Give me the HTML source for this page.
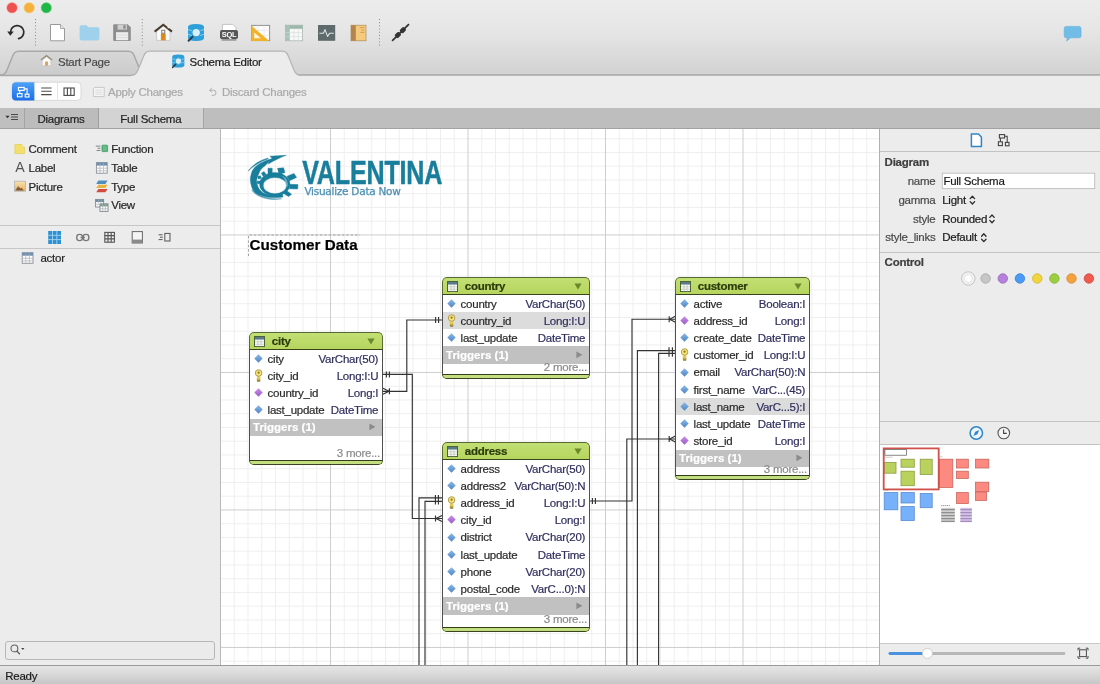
<!DOCTYPE html>
<html lang="en"><head><meta charset="utf-8"><title>Valentina Studio - Schema Editor</title>
<style>
html,body{margin:0;padding:0}
body{width:1100px;height:684px;overflow:hidden;position:relative;background:#ececec;font-family:"Liberation Sans",sans-serif;font-size:11.500px;letter-spacing:-.25px;line-height:13px;color:#262626;-webkit-text-stroke:.2px}
div,span,svg,b{position:absolute;box-sizing:border-box}
svg{overflow:visible}
.t{white-space:nowrap}
#topbar{left:0;top:0;width:1100px;height:75px;background:linear-gradient(#ececec 0%,#e6e6e6 40%,#d2d2d2 100%)}
#topline{left:0;top:74px;width:1100px;height:2px;background:linear-gradient(#b6b6b6,#a9a9a9 50%,#c9c9c9)}
#tb2{left:0;top:76px;width:1100px;height:32px;background:#ececec}
#strip{left:0;top:108px;width:1100px;height:21px;background:#bebebe;border-bottom:1px solid #a2a2a2}
#strip .cell{top:0;height:20px;text-align:center;line-height:21px;color:#1f1f1f}
#left{left:0;top:129px;width:220px;height:536px;background:#ececec}
#leftborder{left:220px;top:129px;width:1px;height:536px;background:#b9b9b9}
#canvas{left:221px;top:129px;width:658px;height:536px;background:#fff;overflow:hidden}
#rightborder{left:879px;top:129px;width:1px;height:536px;background:#b0b0b0}
#right{left:880px;top:129px;width:220px;height:536px;background:#ececec}
#status{left:0;top:665px;width:1100px;height:19px;background:linear-gradient(#e5e5e5,#d9d9d9 45%,#c6c6c6);border-top:1px solid #999}
.dis{color:#a9a9a9}
.hr{height:1px;background:#c6c6c6}
/* ER tables */
.tbl{border-radius:5px;overflow:hidden;background:#b9d866}
.tbl .hd{left:0;top:0;right:0;height:17px;border:1px solid #5a6933;border-bottom:none;border-radius:5px 5px 0 0;background:linear-gradient(#c2df74,#b5d55e)}
.tbl .hd b{left:21.800px;top:2px;color:#2b3a0c}
.tbl .body{left:0;right:0;top:17px;background:#fff;border:1px solid #505050;border-top-color:#38441c;border-bottom-color:#333d1a}
.tbl .ft{left:0;right:0;bottom:0;height:4px;border:1px solid #39431d;border-top:none;border-radius:0 0 5px 5px;background:#c3de80}
.row{left:0;right:0;height:17.190px}
.row .n{left:17.600px;top:2.800px;color:#2a2a2a}
.row .ty{right:3.800px;top:2.800px;color:#2f2f5f}
.row.sel{background:#dcdcdc}
.trg{left:0;right:0;height:17.190px;background:#c1c1c1}
.trg b{left:3px;top:2.800px;color:#fff;letter-spacing:0}
.more{right:2px;color:#8a8a8a}
.lab{color:#4a4a4a;text-align:right}
#app{left:0;top:0;width:1100px;height:684px;overflow:hidden;will-change:transform;background:#ececec}
</style></head><body><div id="app">
<div id="topbar"></div>
<div id="topline"></div>
<div id="tb2"></div>
<svg id="topsvg" width="1100" height="108" viewBox="0 0 1100 108" style="left:0;top:0">
<defs>
<linearGradient id="gtab" x1="0" y1="0" x2="0" y2="1"><stop offset="0" stop-color="#d7d7d7"/><stop offset="1" stop-color="#cbcbcb"/></linearGradient>
<linearGradient id="gblue" x1="0" y1="0" x2="0" y2="1"><stop offset="0" stop-color="#4da0f8"/><stop offset="1" stop-color="#1d6fe8"/></linearGradient>
</defs>
<!-- traffic lights -->
<circle cx="12" cy="7.8" r="5.3" fill="#f0514e" stroke="#f6a9a6" stroke-width=".5"/>
<circle cx="29.2" cy="7.8" r="5.3" fill="#f5b13a" stroke="#f8d598" stroke-width=".5"/>
<circle cx="46.3" cy="7.8" r="5.3" fill="#20b747" stroke="#8fdca2" stroke-width=".5"/>
<!-- separators -->
<g stroke="#8a8a8a" stroke-width="1" stroke-dasharray="1 2.2">
<line x1="35.5" y1="19" x2="35.5" y2="46"/><line x1="142.3" y1="19" x2="142.3" y2="46"/><line x1="379.5" y1="19" x2="379.5" y2="46"/>
</g>
<!-- undo -->
<g fill="none" stroke="#2c2c2c" stroke-width="1.7" stroke-linecap="round">
<path d="M10.6 32.2 A6.6 6.6 0 1 1 18.6 38.6"/>
</g>
<path d="M7.2 31.4 L13.8 31.4 L10.3 35.8 Z" fill="#2c2c2c"/>
<!-- new doc -->
<path d="M50.5 24.5 H60.5 L64.5 28.5 V40.8 H50.5 Z" fill="#fff" stroke="#9a9a9a" stroke-width="1"/>
<path d="M60.5 24.5 V28.5 H64.5" fill="#e9e9e9" stroke="#9a9a9a" stroke-width=".8"/>
<!-- folder -->
<path d="M79.6 27 Q79.6 25.2 81.4 25.2 H86.5 L88.6 27.2 H97.6 Q99.4 27.2 99.4 29 V38.6 Q99.4 40.4 97.6 40.4 H81.4 Q79.6 40.4 79.6 38.6 Z" fill="#9fd1ec"/>

<!-- save -->
<path d="M113.2 25.4 Q113.2 24.2 114.4 24.2 H127.6 L130.8 27.2 V39.8 Q130.8 41 129.6 41 H114.4 Q113.2 41 113.2 39.8 Z" fill="#8d8d8d"/>
<rect x="117.6" y="24.6" width="9.4" height="5" fill="#cfcfcf"/><rect x="123.3" y="25.2" width="2.4" height="3.6" fill="#8d8d8d"/>
<rect x="116" y="32.2" width="12.2" height="8" fill="#ededed"/>
<path d="M116 35h12.2M116 37.6h12.2" stroke="#d3d3d3" stroke-width=".7"/>
<!-- home -->
<path d="M156.6 31.5 V40.4 H170 V31.5 L163.3 26 Z" fill="#fbfbfb" stroke="#bdbdbd" stroke-width=".7"/>
<rect x="160.9" y="33.6" width="4.8" height="6.8" fill="#dc8a1c"/>
<rect x="161.8" y="30.2" width="3" height="3" fill="#fff" stroke="#6a5a48" stroke-width=".8"/>
<path d="M154.6 31.6 L163.3 24.8 L172 31.6" fill="none" stroke="#4a3c2c" stroke-width="2" stroke-linejoin="miter"/>
<rect x="167.6" y="25.2" width="1.8" height="3" fill="#eee"/>
<!-- db search -->
<g>
<path d="M188 27 Q188 24 196 24 Q204 24 204 27 V38 Q204 41 196 41 Q188 41 188 38 Z" fill="#2e9fd8"/>
<path d="M188 29.6 Q196 33 204 29.6 M188 34.2 Q196 37.6 204 34.2" fill="none" stroke="#7fcdf0" stroke-width="1.1"/>
<circle cx="196.2" cy="32.6" r="4.3" fill="#d8f0fb" stroke="#2e9fd8" stroke-width="1.2"/>
<path d="M192.6 36.6 L188.6 40.8" stroke="#2b3f50" stroke-width="2" stroke-linecap="round"/>
</g>
<!-- SQL -->
<path d="M222.4 24.4 H232.8 L236 27.6 V31 H222.4 Z" fill="#fff" stroke="#b0b0b0" stroke-width=".7"/>
<rect x="220" y="30" width="18" height="9" rx="1.8" fill="#575757"/>
<rect x="221.6" y="39" width="14.8" height="1.8" fill="#9b9b9b"/>
<text x="229" y="37.3" font-family="Liberation Sans, sans-serif" font-weight="bold" font-size="7.4" fill="#fff" text-anchor="middle" textLength="14.6" lengthAdjust="spacingAndGlyphs">SQL</text>
<!-- ruler -->
<rect x="251.600" y="25.400" width="18" height="15.200" fill="#fbfbfb" stroke="#8f8f8f" stroke-width="1"/><path d="M258 25.400v6M264 25.400v11M251.600 30.500h18M251.600 35.500h18" stroke="#e4e4e4" stroke-width=".6"/>
<path d="M251.300 25.600 L269.400 40.900 H251.300 Z" fill="#f0b32a"/>
<path d="M254.200 32.600 L260.800 38.200 H254.200 Z" fill="#fcf6e0"/>
<!-- table -->
<rect x="285.4" y="25.2" width="17.2" height="15.6" fill="#f7f9f8" stroke="#a9b5b0" stroke-width=".8"/>
<rect x="285.4" y="25.2" width="17.2" height="3.6" fill="#9db7ad"/>
<rect x="285.4" y="25.2" width="4.4" height="15.6" fill="#a9c2b8"/>
<path d="M285.4 32.6h17.2M285.4 36.6h17.2M294 28.8v12M298.4 28.8v12" stroke="#d4dcd9" stroke-width=".6"/>
<!-- monitor -->
<rect x="318" y="25" width="17.2" height="15.8" fill="#5e6a6b"/>
<path d="M319.4 33.2 H323.4 L325 29.6 L327.6 36.4 L329.6 33.2 H333.8" fill="none" stroke="#d9e6e6" stroke-width="1.1" stroke-linejoin="round"/>
<!-- book -->
<rect x="351" y="25.2" width="15" height="15.6" fill="#f6ca7c" stroke="#b08a5c" stroke-width=".7"/>
<rect x="351" y="25.2" width="4.8" height="15.6" fill="#b5844c"/>
<path d="M359.6 27.6h4.6M361.4 30h2.8M360.4 32.4h3.8" stroke="#c99a52" stroke-width=".9"/>
<!-- plug -->
<g transform="rotate(-45 400.5 32.5)">
<rect x="388.6" y="31.7" width="23.8" height="1.7" fill="#333"/>
<rect x="394" y="30.200" width="5.600" height="4.600" rx="1.200" fill="#333"/>
<rect x="401" y="30.200" width="5.600" height="4.600" rx="1.200" fill="#333"/>
</g>
<!-- chat -->
<path d="M1064.2 28.4 Q1064.2 26.4 1066.2 26.4 H1079 Q1081 26.4 1081 28.4 V35.8 Q1081 37.8 1079 37.8 H1070.6 L1066.6 41 L1067.6 37.8 H1066.2 Q1064.2 37.8 1064.2 35.8 Z" fill="#72bde7" stroke="#62add9" stroke-width=".6"/>
<!-- tabs -->
<path d="M0.0 75.5 C4.0 75.5 5.5 73.5 7.0 70 L12.5 56.5 C14.0 53 15.0 51.2 19.0 51.2 H128.0 C132.0 51.2 133.0 53 134.5 56.5 L140.0 70 C141.5 73.5 143.0 75.5 147.0 75.5 Z" fill="url(#gtab)" stroke="#a9a9a9" stroke-width="1.5"/>
<path d="M131.0 75.5 C135.0 75.5 136.5 73.5 138.0 70 L143.5 56.5 C145.0 53 146.0 51.2 150.0 51.2 H282.0 C286.0 51.2 287.0 53 288.5 56.5 L294.0 70 C295.5 73.5 297.0 75.5 301.0 75.5 V78 H131 Z" fill="#ececec"/>
<path d="M131.0 75.5 C135.0 75.5 136.5 73.5 138.0 70 L143.5 56.5 C145.0 53 146.0 51.2 150.0 51.2 H282.0 C286.0 51.2 287.0 53 288.5 56.5 L294.0 70 C295.5 73.5 297.0 75.5 301.0 75.5" fill="none" stroke="#b4b4b4" stroke-width="1.2"/>
<!-- tab icons -->
<g transform="translate(40.6 55.2) scale(.64) translate(-154 -24)">
<path d="M156.6 31.500 V40.400 H170 V31.500 L163.300 26 Z" fill="#fbfbfb" stroke="#bdbdbd" stroke-width=".9"/>
<rect x="160.900" y="34" width="4.800" height="6.400" fill="#dca45c"/>
<path d="M154.6 31.600 L163.300 24.800 L172 31.600" fill="none" stroke="#9a8c7c" stroke-width="2.200"/>
</g>
<g transform="translate(171.8 54.6) scale(.76) translate(-187.5 -24)"><path d="M188 27 Q188 24 196 24 Q204 24 204 27 V38 Q204 41 196 41 Q188 41 188 38 Z" fill="#2e9fd8"/>
<path d="M188 29.6 Q196 33 204 29.6 M188 34.2 Q196 37.6 204 34.2" fill="none" stroke="#7fcdf0" stroke-width="1.1"/>
<circle cx="196.2" cy="32.6" r="4.3" fill="#d8f0fb" stroke="#2e9fd8" stroke-width="1.2"/>
<path d="M192.6 36.6 L188.6 40.8" stroke="#2b3f50" stroke-width="2" stroke-linecap="round"/></g>
<!-- segmented control -->
<rect x="12" y="82.2" width="69" height="18.2" rx="4" fill="#fff" stroke="#d0d0d0" stroke-width=".8"/>
<path d="M16 82.200 H34.400 V100.400 H16 Q12 100.400 12 96.400 V86.200 Q12 82.200 16 82.200 Z" fill="url(#gblue)"/>
<path d="M57.6 83v16.600" stroke="#e3e3e3" stroke-width="1"/>
<g fill="none" stroke="#fff" stroke-width="1.100">
<rect x="18.4" y="87.400" width="5.800" height="3"/><rect x="17.4" y="93.600" width="4.600" height="3.200"/><rect x="25.2" y="94.200" width="3.800" height="2.800"/>
<path d="M24.200 88.900 H27.100 V94.200 M19.700 90.400 V93.600"/>
</g>
<path d="M41.200 88h10.400M41.200 91.300h10.400M41.200 94.600h10.400" stroke="#4a4a4a" stroke-width="1.100"/>
<g fill="none" stroke="#4a4a4a" stroke-width="1.100"><rect x="64" y="88" width="10.200" height="7.400"/><path d="M67.400 88v7.400M70.800 88v7.400"/></g>
<!-- apply icon -->
<path d="M94.600 87.400 H104.200 V96.600 H93.400 V88.600 Z" fill="#f4f4f4" stroke="#c4c4c4" stroke-width=".9"/>
<path d="M95.400 90.200h7M95.400 92.200h7M95.400 94.200h7" stroke="#d6d6d6" stroke-width=".7"/>
<!-- discard icon -->
<g fill="none" stroke="#ababab" stroke-width="1"><path d="M209.800 90.200 H213.400 A2.600 2.600 0 0 1 213.400 95.400 H211.800"/><path d="M211.800 88 L209.600 90.200 L211.800 92.400"/></g>
</svg>
<span class="t" style="left:58px;top:56px;color:#4b4b4b">Start Page</span>
<span class="t" style="left:189.500px;top:56px;color:#1d1d1d">Schema Editor</span>
<span class="t dis" style="left:108px;top:86px">Apply Changes</span>
<span class="t dis" style="left:222px;top:86px">Discard Changes</span>
<div id="strip">
<div class="cell" style="left:0;width:25px;background:#bfbfbf;border-right:1px solid #a4a4a4"></div>
<div class="cell t" style="left:25px;width:74px;background:#bcbcbc;border-right:1px solid #9f9f9f"><span style="left:12.400px;top:.8px">Diagrams</span></div>
<div class="cell t" style="left:99px;width:105px;background:#d3d3d3;border-right:1px solid #a4a4a4"><span style="left:21.200px;top:.8px">Full Schema</span></div>
<svg width="24" height="20" viewBox="0 0 24 20" style="left:0;top:0">
<path d="M5.400 7.800 h4.200 l-2.100 2.500 z" fill="#333"/>
<path d="M11 6.500h7M11 9h7M11 11.500h7" stroke="#4a4a4a" stroke-width="1.100"/>
</svg>
</div>
<div id="left">
<svg width="220" height="140" viewBox="0 129 220 140" style="left:0;top:0">
<!-- comment -->
<path d="M14.900 144.500 H21.800 L24.500 147.200 V153.600 H14.900 Z" fill="#f3e06a" stroke="#e3cb52" stroke-width=".7"/>
<path d="M21.800 144.500 V147.200 H24.500" fill="#faf0b0" stroke="#e3cb52" stroke-width=".5"/>
<!-- picture -->
<defs><linearGradient id="pic" x1="0" y1="0" x2="0" y2="1"><stop offset="0" stop-color="#f8e2b0"/><stop offset="1" stop-color="#ecb060"/></linearGradient></defs><rect x="14.500" y="181.200" width="11" height="10" fill="url(#pic)" stroke="#b9b9b9" stroke-width=".9"/>
<path d="M15.200 190.600 L18.200 186.200 L20.400 188.600 L21.600 187.800 L23.800 190.600 Z" fill="#7d5a3a"/>
<!-- function -->
<rect x="102" y="145.200" width="5.600" height="6.400" rx=".6" fill="#62bd88" stroke="#3e9363" stroke-width=".8"/>
<path d="M95.800 146.100h4.600M97.600 148.300h2.800M96.600 150.500h3.800" stroke="#777" stroke-width=".9"/>
<!-- table -->
<g>
<rect x="96.400" y="162.600" width="10.800" height="10.600" fill="#fdfdfd" stroke="#8b8f96" stroke-width=".9"/>
<rect x="96.400" y="162.600" width="10.800" height="3" fill="#6f8fae"/>
<path d="M96.400 168.200h10.800M96.400 170.800h10.800M100 163v10.200M103.600 163v10.200" stroke="#aab0b6" stroke-width=".7"/>
</g>
<!-- type -->
<path d="M98.400 180.600 H107.600 L105.400 184 H96.200 Z" fill="#4f8fc0"/>
<path d="M98.400 184.800 H107.600 L105.400 188 H96.200 Z" fill="#e8b33c"/>
<path d="M98.400 188.900 H107.600 L105.400 192.300 H96.200 Z" fill="#d24c3e"/>
<!-- view -->
<g>
<rect x="95.600" y="199.400" width="8" height="7.600" fill="#fdfdfd" stroke="#7d8790" stroke-width=".9"/>
<rect x="95.600" y="199.400" width="8" height="2.600" fill="#6f8f9e"/>
<rect x="100" y="203.800" width="8" height="7.600" fill="#fdfdfd" stroke="#7d8790" stroke-width=".9"/>
<rect x="100" y="203.800" width="8" height="2.600" fill="#7d9f8e"/>
<path d="M100 208.800h8M102.700 204v7.400M105.300 204v7.400M98.300 199.600v4M101 199.600v4M95.600 204.400h4.400" stroke="#aab0b6" stroke-width=".7"/>
</g>
<!-- icon row -->
<rect x="48.200" y="231" width="12.800" height="13" fill="#2f8fd0"/>
<path d="M48.200 235.300h12.800M48.200 239.600h12.800M52.500 231v13M56.800 231v13" stroke="#9fd4f4" stroke-width=".9"/>
<g fill="none" stroke="#7a7a7a" stroke-width="1.400"><rect x="76.800" y="234.400" width="5.600" height="6.200" rx="2.600"/><rect x="83.200" y="234.400" width="5.600" height="6.200" rx="2.600"/><path d="M80.600 237.500h4.400"/></g>
<g fill="none" stroke="#555" stroke-width="1.100"><rect x="104.800" y="232.400" width="9.600" height="9.800"/><path d="M104.800 235.600h9.600M104.800 238.900h9.600M108 232.400v9.800M111.200 232.400v9.800"/></g>
<rect x="132.200" y="231.600" width="10.200" height="11.400" fill="#f4f4f4" stroke="#666" stroke-width="1"/>
<rect x="132.200" y="239.600" width="10.200" height="3.400" fill="#8a8a8a"/>
<g fill="none" stroke="#555" stroke-width="1"><rect x="164.800" y="233.400" width="5.200" height="7.600"/><path d="M158.600 234.800h4M160 237.200h2.800M158.600 239.600h4"/></g>
<!-- actor -->
<g transform="translate(-74.200 90.100)"><rect x="96.400" y="162.600" width="10.800" height="10.600" fill="#fdfdfd" stroke="#8b8f96" stroke-width=".9"/>
<rect x="96.400" y="162.600" width="10.800" height="3" fill="#6f8fae"/>
<path d="M96.400 168.200h10.800M96.400 170.800h10.800M100 163v10.200M103.600 163v10.200" stroke="#aab0b6" stroke-width=".7"/></g>
</svg>
<span class="t" style="left:28.500px;top:14px">Comment</span>
<span class="t" style="left:15.200px;top:32.400px;font-size:14.200px;letter-spacing:0;-webkit-text-stroke:0;color:#555">A</span>
<span class="t" style="left:28.500px;top:33px">Label</span>
<span class="t" style="left:28.500px;top:51.500px">Picture</span>
<span class="t" style="left:111.200px;top:14px">Function</span>
<span class="t" style="left:111.200px;top:33px">Table</span>
<span class="t" style="left:111.200px;top:51.500px">Type</span>
<span class="t" style="left:111.200px;top:70px">View</span>
<div class="hr" style="left:0;top:96px;width:220px"></div>
<div class="hr" style="left:0;top:119px;width:220px"></div>
<span class="t" style="left:40.400px;top:123px">actor</span>
<div style="left:5px;top:512px;width:210px;height:18.500px;border:1px solid #b7b7b7;border-radius:3px;background:#ebebeb"></div>
<svg width="20" height="14" viewBox="0 0 20 14" style="left:9.400px;top:513.800px"><circle cx="5.400" cy="5.400" r="3.400" fill="none" stroke="#5f5f5f" stroke-width="1.100"/><path d="M7.900 8 L10.800 11.200" stroke="#5f5f5f" stroke-width="1.300"/><path d="M12.200 5h3.200l-1.600 2.100z" fill="#444"/></svg>
</div>
<div id="leftborder"></div>
<div id="canvas">
<svg width="658" height="536" viewBox="221 129 658 536" style="left:0;top:0">
<defs><linearGradient id="kg" x1="0" y1="0" x2="0" y2="1"><stop offset="0" stop-color="#f6da6a"/><stop offset=".45" stop-color="#e0c24c"/><stop offset="1" stop-color="#747034"/></linearGradient><linearGradient id="dgb" x1="0" y1="0" x2="0" y2="1"><stop offset="0" stop-color="#8bb8e6"/><stop offset="1" stop-color="#4f86c8"/></linearGradient><linearGradient id="dgp" x1="0" y1="0" x2="0" y2="1"><stop offset="0" stop-color="#c892ea"/><stop offset="1" stop-color="#9a58c8"/></linearGradient></defs>
<path d="M234.25 129 V665 M248 129 V665 M261.75 129 V665 M275.5 129 V665 M289.25 129 V665 M303 129 V665 M316.75 129 V665 M344.25 129 V665 M358 129 V665 M371.75 129 V665 M385.5 129 V665 M399.25 129 V665 M413 129 V665 M426.75 129 V665 M440.5 129 V665 M454.25 129 V665 M481.75 129 V665 M495.5 129 V665 M509.25 129 V665 M523 129 V665 M536.75 129 V665 M550.5 129 V665 M564.25 129 V665 M578 129 V665 M591.75 129 V665 M619.25 129 V665 M633 129 V665 M646.75 129 V665 M660.5 129 V665 M674.25 129 V665 M688 129 V665 M701.75 129 V665 M715.5 129 V665 M729.25 129 V665 M756.75 129 V665 M770.5 129 V665 M784.25 129 V665 M798 129 V665 M811.75 129 V665 M825.5 129 V665 M839.25 129 V665 M853 129 V665 M866.75 129 V665 M221 138.69 H879 M221 152.44 H879 M221 166.19 H879 M221 179.94 H879 M221 193.69 H879 M221 207.44 H879 M221 221.19 H879 M221 248.69 H879 M221 262.44 H879 M221 276.19 H879 M221 289.94 H879 M221 303.69 H879 M221 317.44 H879 M221 331.19 H879 M221 344.94 H879 M221 358.69 H879 M221 386.19 H879 M221 399.94 H879 M221 413.69 H879 M221 427.44 H879 M221 441.19 H879 M221 454.94 H879 M221 468.69 H879 M221 482.44 H879 M221 496.19 H879 M221 523.69 H879 M221 537.44 H879 M221 551.19 H879 M221 564.94 H879 M221 578.69 H879 M221 592.44 H879 M221 606.19 H879 M221 619.94 H879 M221 633.69 H879 M221 661.19 H879" stroke="#efefef" stroke-width="1" fill="none"/>
<path d="M330.5 129 V665 M468 129 V665 M605.5 129 V665 M743 129 V665 M221 234.94 H879 M221 372.44 H879 M221 509.94 H879 M221 647.44 H879" stroke="#cdcdcd" stroke-width="1" fill="none"/>
<g fill="#197e9c" stroke="#197e9c" stroke-width=".45" stroke-linejoin="round">
<!-- gear ring -->
<path fill-rule="evenodd" d="M259.600 184.300 A15.200 11.700 0 0 1 290 184.300 A15.200 11.700 0 0 1 259.600 184.300 Z M263.200 185.600 A11.700 8.100 0 0 0 286.600 185.600 A11.700 8.100 0 0 0 263.200 185.600 Z"/>
<!-- teeth -->
<path d="M268 168.200 H272.200 V174 H268 Z M277.600 168.300 L283.600 167.800 L285 172.600 L279 174.400 Z M287 176.200 L294 173.400 L296.600 177.400 L289.400 180.800 Z M289.600 184.300 L298 184.600 L297.700 189 L289.600 188.800 Z M286.800 190.800 L291.600 194.200 L288.600 196.600 L283.600 193.600 Z M261.400 173.200 L264 171.600 L266.200 174.600 L263.200 176.400 Z M257.400 176.600 L260.400 175.800 L261.400 178.200 L258.400 179 Z M257 181.200 L260.200 181 L260.600 183.600 L257.400 183.800 Z"/>
<!-- swoosh -->
<path d="M286.2 155.3 L269.9 156.2 L272.3 158.5 C270.9 159.0 266.5 160.3 264.0 161.4 C261.5 162.5 259.1 163.9 257.3 165.2 C255.6 166.5 254.4 167.7 253.5 169.0 C252.6 170.3 252.1 170.9 251.6 172.8 C251.1 174.7 250.2 177.5 250.4 180.4 C250.6 183.3 251.7 187.6 253.0 190.0 C254.3 192.4 256.2 193.4 258.5 194.6 C260.8 195.8 264.1 196.6 266.8 197.1 C269.6 197.6 272.3 197.6 275.0 197.6 C277.7 197.6 281.7 197.0 283.0 196.9 L282.6 194.3 C280.8 194.5 275.2 195.4 272.0 195.2 C268.8 195.0 265.7 194.2 263.5 193.0 C261.3 191.8 259.8 190.1 258.6 188.0 C257.5 185.9 256.5 182.9 256.6 180.4 C256.7 177.9 258.4 174.7 259.2 172.8 C260.0 170.9 260.2 170.3 261.3 169.0 C262.4 167.7 264.5 166.2 265.8 165.0 C267.1 163.8 268.6 162.2 269.1 161.6 L268.3 164.1 C274 160.6 280 157.600 286.2 155.3 Z"/>
<path d="M248.200 171 C253 166 260 161.600 268.500 158.800 L267.600 158.200 C259.500 160.400 252.500 165 248.200 171 Z"/>
<path d="M251.400 189.800 C257 198 270.500 201 281.600 198.800 C270 199.200 258.500 196.600 251.400 189.800 Z" opacity=".75"/>
<path d="M284.600 177.400 C287 180.400 287.800 183.600 287 186.800 M282.800 176.200 C285.800 179.400 286.600 183 285.600 186.400" fill="none" stroke="#bfe9f4" stroke-width=".5"/>
</g>
<text x="302.200" y="184.400" font-family="Liberation Sans, sans-serif" font-weight="bold" font-size="32.600" fill="#197e9c" stroke="#197e9c" stroke-width=".5" stroke-linejoin="round" textLength="140" lengthAdjust="spacingAndGlyphs">VALENTINA</text>
<text x="304.400" y="194.700" font-family="DejaVu Sans, Liberation Sans, sans-serif" font-size="10.200" fill="#4a8fb4" stroke="#4a8fb4" stroke-width=".25" textLength="96.200" lengthAdjust="spacingAndGlyphs">Visualize Data Now</text>

<path d="M248.5 256 V235 H360" fill="none" stroke="#9a9a9a" stroke-width=".9" stroke-dasharray="2.4 2"/>
<g fill="none" stroke="#333" stroke-width="1.150">
<!-- city.city_id -> address.city_id -->
<path d="M383 374.400 H412.300 V518.500 H442"/>
<path d="M386.400 371.400 v6 M389.400 371.400 v6"/>
<path d="M435.500 515.500 v6 M442 515.400 L436 518.500 L442 521.600"/>
<!-- city.country_id -> country.country_id -->
<path d="M383 391.300 H406.800 V320 H442"/>
<path d="M389.400 388.300 v6 M383 388.300 L389 391.300 L383 394.300"/>
<path d="M435.600 317 v6 M438.600 317 v6"/>
<!-- address.address_id left -> down -->
<path d="M442 497.900 H419 V665"/>
<path d="M442 501.400 H425 V665"/>
<path d="M435.400 495 v9.500 M438.400 495 v9.500"/>
<!-- address.address_id right -> customer.address_id -->
<path d="M590 501 H632 V319.200 H675.300"/>
<path d="M592.400 498 v6 M595.400 498 v6"/>
<path d="M669.200 316.200 v6 M675.300 316.200 L669.600 319.200 L675.300 322.200"/>
<!-- customer.customer_id -->
<path d="M675.300 350.600 H637.400 V665"/>
<path d="M675.300 353.400 H658.600 V665"/>
<path d="M669 347.300 v9.400 M672.400 347.300 v9.400"/>
<!-- customer.store_id -->
<path d="M675.300 439 H626.800 V665"/>
<path d="M669.200 436 v6 M675.300 436 L669.600 439 L675.300 442"/>
</g>

</svg>
<span class="t" style="left:28.6px;top:107.4px;font-weight:bold;font-size:15.200px;letter-spacing:0;line-height:17px;color:#000">Customer Data</span>
<div class="tbl" style="left:28px;top:203px;width:134px;height:133px">
<div class="hd"><svg width="14" height="14" viewBox="0 0 14 14" style="left:4px;top:3px"><rect x=".5" y=".5" width="10" height="10" fill="#fdfdfd" stroke="#4f6238" stroke-width="1"/><rect x="1" y="1" width="9" height="2.600" fill="#587b8c"/><path d="M1 5.800h9M1 8.200h9M4 3.600v7M7 3.600v7" stroke="#b4bfae" stroke-width=".7"/></svg><b class="t">city</b><svg width="10" height="8" viewBox="0 0 10 8" style="right:4.800px;top:5px"><path d="M.4 .6 H7.600 L4 6.400 Z" fill="#6a872c"/></svg></div>
<div class="body" style="height:112px">
<div class="row" style="top:-0.2px"><svg width="10" height="10" viewBox="0 0 10 10" style="left:3.900px;top:4px"><path d="M4.500 .3 L8.700 4.500 L4.500 8.700 L.3 4.500 Z" fill="url(#dgb)"/></svg><span class="n t">city</span><span class="ty t">VarChar(50)</span></div>
<div class="row" style="top:16.99px"><svg width="10" height="14" viewBox="0 0 10 14" style="left:3.900px;top:1.900px"><rect x="2.800" y="7" width="3.600" height="5.800" rx="1" fill="url(#kg)"/><circle cx="4.600" cy="4" r="3.300" fill="#fae27a" stroke="#a8964a" stroke-width=".9"/><circle cx="4.600" cy="3.700" r="1.100" fill="#8c7b1e"/></svg><span class="n t">city_id</span><span class="ty t">Long:I:U</span></div>
<div class="row" style="top:34.18px"><svg width="10" height="10" viewBox="0 0 10 10" style="left:3.900px;top:4px"><path d="M4.500 .3 L8.700 4.500 L4.500 8.700 L.3 4.500 Z" fill="url(#dgp)"/></svg><span class="n t">country_id</span><span class="ty t">Long:I</span></div>
<div class="row" style="top:51.37px"><svg width="10" height="10" viewBox="0 0 10 10" style="left:3.900px;top:4px"><path d="M4.500 .3 L8.700 4.500 L4.500 8.700 L.3 4.500 Z" fill="url(#dgb)"/></svg><span class="n t">last_update</span><span class="ty t">DateTime</span></div>
<div class="trg" style="top:68.56px"><b class="t">Triggers (1)</b><svg width="8" height="8" viewBox="0 0 8 8" style="right:5px;top:4.800px"><path d="M.4 .4 L6.400 3.800 L.4 7.200 Z" fill="#8b8b8b"/></svg></div>
<span class="more t" style="top:96.7px">3 more...</span>
</div><div class="ft"></div></div>
<div class="tbl" style="left:221px;top:148px;width:148px;height:102px">
<div class="hd"><svg width="14" height="14" viewBox="0 0 14 14" style="left:4px;top:3px"><rect x=".5" y=".5" width="10" height="10" fill="#fdfdfd" stroke="#4f6238" stroke-width="1"/><rect x="1" y="1" width="9" height="2.600" fill="#587b8c"/><path d="M1 5.800h9M1 8.200h9M4 3.600v7M7 3.600v7" stroke="#b4bfae" stroke-width=".7"/></svg><b class="t">country</b><svg width="10" height="8" viewBox="0 0 10 8" style="right:4.800px;top:5px"><path d="M.4 .6 H7.600 L4 6.400 Z" fill="#6a872c"/></svg></div>
<div class="body" style="height:81px">
<div class="row" style="top:-0.2px"><svg width="10" height="10" viewBox="0 0 10 10" style="left:3.900px;top:4px"><path d="M4.500 .3 L8.700 4.500 L4.500 8.700 L.3 4.500 Z" fill="url(#dgb)"/></svg><span class="n t">country</span><span class="ty t">VarChar(50)</span></div>
<div class="row sel" style="top:16.99px"><svg width="10" height="14" viewBox="0 0 10 14" style="left:3.900px;top:1.900px"><rect x="2.800" y="7" width="3.600" height="5.800" rx="1" fill="url(#kg)"/><circle cx="4.600" cy="4" r="3.300" fill="#fae27a" stroke="#a8964a" stroke-width=".9"/><circle cx="4.600" cy="3.700" r="1.100" fill="#8c7b1e"/></svg><span class="n t">country_id</span><span class="ty t">Long:I:U</span></div>
<div class="row" style="top:34.18px"><svg width="10" height="10" viewBox="0 0 10 10" style="left:3.900px;top:4px"><path d="M4.500 .3 L8.700 4.500 L4.500 8.700 L.3 4.500 Z" fill="url(#dgb)"/></svg><span class="n t">last_update</span><span class="ty t">DateTime</span></div>
<div class="trg" style="top:51.37px"><b class="t">Triggers (1)</b><svg width="8" height="8" viewBox="0 0 8 8" style="right:5px;top:4.800px"><path d="M.4 .4 L6.400 3.800 L.4 7.200 Z" fill="#8b8b8b"/></svg></div>
<span class="more t" style="top:65.6px">2 more...</span>
</div><div class="ft"></div></div>
<div class="tbl" style="left:221px;top:313px;width:148px;height:190px">
<div class="hd"><svg width="14" height="14" viewBox="0 0 14 14" style="left:4px;top:3px"><rect x=".5" y=".5" width="10" height="10" fill="#fdfdfd" stroke="#4f6238" stroke-width="1"/><rect x="1" y="1" width="9" height="2.600" fill="#587b8c"/><path d="M1 5.800h9M1 8.200h9M4 3.600v7M7 3.600v7" stroke="#b4bfae" stroke-width=".7"/></svg><b class="t">address</b><svg width="10" height="8" viewBox="0 0 10 8" style="right:4.800px;top:5px"><path d="M.4 .6 H7.600 L4 6.400 Z" fill="#6a872c"/></svg></div>
<div class="body" style="height:169px">
<div class="row" style="top:-0.2px"><svg width="10" height="10" viewBox="0 0 10 10" style="left:3.900px;top:4px"><path d="M4.500 .3 L8.700 4.500 L4.500 8.700 L.3 4.500 Z" fill="url(#dgb)"/></svg><span class="n t">address</span><span class="ty t">VarChar(50)</span></div>
<div class="row" style="top:16.99px"><svg width="10" height="10" viewBox="0 0 10 10" style="left:3.900px;top:4px"><path d="M4.500 .3 L8.700 4.500 L4.500 8.700 L.3 4.500 Z" fill="url(#dgb)"/></svg><span class="n t">address2</span><span class="ty t">VarChar(50):N</span></div>
<div class="row" style="top:34.18px"><svg width="10" height="14" viewBox="0 0 10 14" style="left:3.900px;top:1.900px"><rect x="2.800" y="7" width="3.600" height="5.800" rx="1" fill="url(#kg)"/><circle cx="4.600" cy="4" r="3.300" fill="#fae27a" stroke="#a8964a" stroke-width=".9"/><circle cx="4.600" cy="3.700" r="1.100" fill="#8c7b1e"/></svg><span class="n t">address_id</span><span class="ty t">Long:I:U</span></div>
<div class="row" style="top:51.37px"><svg width="10" height="10" viewBox="0 0 10 10" style="left:3.900px;top:4px"><path d="M4.500 .3 L8.700 4.500 L4.500 8.700 L.3 4.500 Z" fill="url(#dgp)"/></svg><span class="n t">city_id</span><span class="ty t">Long:I</span></div>
<div class="row" style="top:68.56px"><svg width="10" height="10" viewBox="0 0 10 10" style="left:3.900px;top:4px"><path d="M4.500 .3 L8.700 4.500 L4.500 8.700 L.3 4.500 Z" fill="url(#dgb)"/></svg><span class="n t">district</span><span class="ty t">VarChar(20)</span></div>
<div class="row" style="top:85.75px"><svg width="10" height="10" viewBox="0 0 10 10" style="left:3.900px;top:4px"><path d="M4.500 .3 L8.700 4.500 L4.500 8.700 L.3 4.500 Z" fill="url(#dgb)"/></svg><span class="n t">last_update</span><span class="ty t">DateTime</span></div>
<div class="row" style="top:102.94px"><svg width="10" height="10" viewBox="0 0 10 10" style="left:3.900px;top:4px"><path d="M4.500 .3 L8.700 4.500 L4.500 8.700 L.3 4.500 Z" fill="url(#dgb)"/></svg><span class="n t">phone</span><span class="ty t">VarChar(20)</span></div>
<div class="row" style="top:120.13px"><svg width="10" height="10" viewBox="0 0 10 10" style="left:3.900px;top:4px"><path d="M4.500 .3 L8.700 4.500 L4.500 8.700 L.3 4.500 Z" fill="url(#dgb)"/></svg><span class="n t">postal_code</span><span class="ty t">VarC...0):N</span></div>
<div class="trg" style="top:137.32px"><b class="t">Triggers (1)</b><svg width="8" height="8" viewBox="0 0 8 8" style="right:5px;top:4.800px"><path d="M.4 .4 L6.400 3.800 L.4 7.200 Z" fill="#8b8b8b"/></svg></div>
<span class="more t" style="top:153.4px">3 more...</span>
</div><div class="ft"></div></div>
<div class="tbl" style="left:454px;top:148px;width:135px;height:203px">
<div class="hd"><svg width="14" height="14" viewBox="0 0 14 14" style="left:4px;top:3px"><rect x=".5" y=".5" width="10" height="10" fill="#fdfdfd" stroke="#4f6238" stroke-width="1"/><rect x="1" y="1" width="9" height="2.600" fill="#587b8c"/><path d="M1 5.800h9M1 8.200h9M4 3.600v7M7 3.600v7" stroke="#b4bfae" stroke-width=".7"/></svg><b class="t">customer</b><svg width="10" height="8" viewBox="0 0 10 8" style="right:4.800px;top:5px"><path d="M.4 .6 H7.600 L4 6.400 Z" fill="#6a872c"/></svg></div>
<div class="body" style="height:182px">
<div class="row" style="top:-0.2px"><svg width="10" height="10" viewBox="0 0 10 10" style="left:3.900px;top:4px"><path d="M4.500 .3 L8.700 4.500 L4.500 8.700 L.3 4.500 Z" fill="url(#dgb)"/></svg><span class="n t">active</span><span class="ty t">Boolean:I</span></div>
<div class="row" style="top:16.99px"><svg width="10" height="10" viewBox="0 0 10 10" style="left:3.900px;top:4px"><path d="M4.500 .3 L8.700 4.500 L4.500 8.700 L.3 4.500 Z" fill="url(#dgp)"/></svg><span class="n t">address_id</span><span class="ty t">Long:I</span></div>
<div class="row" style="top:34.18px"><svg width="10" height="10" viewBox="0 0 10 10" style="left:3.900px;top:4px"><path d="M4.500 .3 L8.700 4.500 L4.500 8.700 L.3 4.500 Z" fill="url(#dgb)"/></svg><span class="n t">create_date</span><span class="ty t">DateTime</span></div>
<div class="row" style="top:51.37px"><svg width="10" height="14" viewBox="0 0 10 14" style="left:3.900px;top:1.900px"><rect x="2.800" y="7" width="3.600" height="5.800" rx="1" fill="url(#kg)"/><circle cx="4.600" cy="4" r="3.300" fill="#fae27a" stroke="#a8964a" stroke-width=".9"/><circle cx="4.600" cy="3.700" r="1.100" fill="#8c7b1e"/></svg><span class="n t">customer_id</span><span class="ty t">Long:I:U</span></div>
<div class="row" style="top:68.56px"><svg width="10" height="10" viewBox="0 0 10 10" style="left:3.900px;top:4px"><path d="M4.500 .3 L8.700 4.500 L4.500 8.700 L.3 4.500 Z" fill="url(#dgb)"/></svg><span class="n t">email</span><span class="ty t">VarChar(50):N</span></div>
<div class="row" style="top:85.75px"><svg width="10" height="10" viewBox="0 0 10 10" style="left:3.900px;top:4px"><path d="M4.500 .3 L8.700 4.500 L4.500 8.700 L.3 4.500 Z" fill="url(#dgb)"/></svg><span class="n t">first_name</span><span class="ty t">VarC...(45)</span></div>
<div class="row sel" style="top:102.94px"><svg width="10" height="10" viewBox="0 0 10 10" style="left:3.900px;top:4px"><path d="M4.500 .3 L8.700 4.500 L4.500 8.700 L.3 4.500 Z" fill="url(#dgb)"/></svg><span class="n t">last_name</span><span class="ty t">VarC...5):I</span></div>
<div class="row" style="top:120.13px"><svg width="10" height="10" viewBox="0 0 10 10" style="left:3.900px;top:4px"><path d="M4.500 .3 L8.700 4.500 L4.500 8.700 L.3 4.500 Z" fill="url(#dgb)"/></svg><span class="n t">last_update</span><span class="ty t">DateTime</span></div>
<div class="row" style="top:137.32px"><svg width="10" height="10" viewBox="0 0 10 10" style="left:3.900px;top:4px"><path d="M4.500 .3 L8.700 4.500 L4.500 8.700 L.3 4.500 Z" fill="url(#dgp)"/></svg><span class="n t">store_id</span><span class="ty t">Long:I</span></div>
<div class="trg" style="top:154.51px"><b class="t">Triggers (1)</b><svg width="8" height="8" viewBox="0 0 8 8" style="right:5px;top:4.800px"><path d="M.4 .4 L6.400 3.800 L.4 7.200 Z" fill="#8b8b8b"/></svg></div>
<span class="more t" style="top:167.6px">3 more...</span>
</div><div class="ft"></div></div>
</div>
<div id="rightborder"></div>
<div id="right">
<svg width="220" height="536" viewBox="880 129 220 536" style="left:0;top:0">
<!-- header icons -->
<path d="M971.400 134 H978.400 L981.400 137 V146.400 H971.400 Z" fill="#fff" stroke="#2f86c8" stroke-width="1.500" stroke-linejoin="round"/>
<g fill="none" stroke="#444" stroke-width="1.100"><rect x="999.400" y="134.600" width="5.200" height="3.400"/><rect x="998.400" y="141.800" width="4" height="3.800"/><rect x="1005.400" y="142.400" width="3.600" height="3.400"/><path d="M1004.600 136.300 H1007.200 V142.400 M1000.400 138 V141.800"/></g>
<path d="M880 151.500h220M880 252.500h220M880 421.500h220M880 444.500h220" stroke="#c3c3c3" stroke-width="1"/>
<!-- name input -->
<rect x="942.300" y="173.200" width="152.400" height="15.400" fill="#fff" stroke="#bdbdbd" stroke-width=".9"/>
<!-- steppers -->
<g fill="none" stroke="#2a2a2a" stroke-width="1.300" stroke-linejoin="round" stroke-linecap="round">
<path d="M970.200 198.600 l2.200 -2.400 l2.200 2.400 M970.200 201.600 l2.200 2.400 l2.200 -2.400"/>
<path d="M989.800 217.400 l2.200 -2.400 l2.200 2.400 M989.800 220.400 l2.200 2.400 l2.200 -2.400"/>
<path d="M981.600 236.200 l2.200 -2.400 l2.200 2.400 M981.600 239.200 l2.200 2.400 l2.200 -2.400"/>
</g>
<!-- colour dots -->
<circle cx="968.300" cy="278.500" r="6.700" fill="#f3f3f3" stroke="#bcbcbc" stroke-width=".9"/>
<circle cx="968.300" cy="278.500" r="4" fill="#fff" stroke="#d6d6d6" stroke-width=".7"/>
<circle cx="985.600" cy="278.500" r="4.700" fill="#c6c6c6" stroke="#a9a9a9" stroke-width=".9"/>
<circle cx="1002.800" cy="278.500" r="4.700" fill="#b780dc" stroke="#9a68c0" stroke-width=".9"/>
<circle cx="1019.900" cy="278.500" r="4.700" fill="#4a9af6" stroke="#3a82d8" stroke-width=".9"/>
<circle cx="1037.300" cy="278.500" r="4.700" fill="#f1d53d" stroke="#d4b830" stroke-width=".9"/>
<circle cx="1054.400" cy="278.500" r="4.700" fill="#9bcf3f" stroke="#82b430" stroke-width=".9"/>
<circle cx="1071.500" cy="278.500" r="4.700" fill="#f5a13c" stroke="#d88a30" stroke-width=".9"/>
<circle cx="1088.900" cy="278.500" r="4.700" fill="#f15b4e" stroke="#d44a40" stroke-width=".9"/>
<!-- nav icons -->
<circle cx="976.300" cy="433" r="6.200" fill="#eef6fc" stroke="#2f86c8" stroke-width="1.500"/>
<path d="M979.200 430 L977.400 434.200 L973.400 436 L975.200 431.800 Z" fill="#2f86c8"/>
<circle cx="1003.800" cy="433" r="5.800" fill="#f4f4f4" stroke="#555" stroke-width="1.100"/>
<path d="M1003.600 429.400 V433.400 H1006.800" fill="none" stroke="#444" stroke-width="1.100"/>
<!-- minimap -->
<rect x="880" y="445" width="220" height="198" fill="#fff"/>
<g stroke-width=".8">
<g fill="#b9d25d" stroke="#8a9f42">
<rect x="884.200" y="462.400" width="11.800" height="10.800"/><rect x="901" y="459.200" width="13.300" height="8"/><rect x="901" y="471.200" width="13.300" height="14.500"/><rect x="920.200" y="459.200" width="12" height="15.400"/>
</g>
<g fill="#fd8a80" stroke="#c9645c">
<rect x="939.400" y="459.200" width="13.400" height="28.200"/><rect x="956.600" y="459.200" width="11.700" height="8.800"/><rect x="956.600" y="471.200" width="11.700" height="7.200"/><rect x="975.600" y="459.200" width="13.200" height="8.800"/><rect x="975.600" y="482.200" width="13.200" height="9.200"/><rect x="956.600" y="492.600" width="11.700" height="10.900"/><rect x="975.600" y="492" width="10.900" height="8.400"/>
</g>
<g fill="#77b0fb" stroke="#5a8cd0">
<rect x="884.200" y="492.600" width="13.600" height="17.200"/><rect x="901" y="492.600" width="13.300" height="10.400"/><rect x="901" y="506.600" width="13.300" height="14"/><rect x="920.200" y="493.500" width="12" height="14.200"/>
</g>
</g>
<rect x="941.200" y="507.800" width="13.600" height="14.400" fill="#cfcfcf"/>
<path d="M941.200 509.600h13.600M941.200 512.600h13.600M941.200 515.600h13.600M941.200 518.600h13.600M941.200 521.400h13.600" stroke="#8f8f8f" stroke-width="1.200"/>
<rect x="960.400" y="507.800" width="11.400" height="14.400" fill="#d4c4e4"/>
<path d="M960.400 509.600h11.400M960.400 512.600h11.400M960.400 515.600h11.400M960.400 518.600h11.400M960.400 521.400h11.400" stroke="#a78cc4" stroke-width="1.200"/>
<path d="M941 505.600h9" stroke="#555" stroke-width=".6" stroke-dasharray="1.400 .6"/>
<path d="M884.600 457.200h8M884.600 490.400h4M939.600 456.800h3" stroke="#999" stroke-width=".5"/>
<rect x="883.700" y="448.400" width="55" height="41" fill="none" stroke="#d0504a" stroke-width="1.800"/>
<rect x="884.900" y="449.400" width="21.600" height="5.800" fill="#fff" stroke="#555" stroke-width=".7"/>
<!-- slider -->
<path d="M880 643.500h220" stroke="#c9c9c9" stroke-width="1"/>
<path d="M890 653.500 H1064" stroke="#b7b7b7" stroke-width="2.800" stroke-linecap="round"/>
<path d="M890 653.500 H927" stroke="#4a92dc" stroke-width="2.800" stroke-linecap="round"/>
<circle cx="927.400" cy="653.400" r="5" fill="#fff" stroke="#c6c6c6" stroke-width=".8"/>
<g fill="none" stroke="#4c4c4c" stroke-width="1"><rect x="1079.600" y="649.800" width="6.800" height="6.800"/><path d="M1078 650.400 V648.200 H1080.200 M1085.800 648.200 H1088 V650.400 M1088 656 V658.200 H1085.800 M1080.200 658.200 H1078 V656"/></g>
</svg>
<b class="t" style="left:4.600px;top:27px;color:#3f3f3f">Diagram</b>
<span class="t lab" style="left:0;width:55.500px;top:45.500px">name</span>
<span class="t" style="left:63.400px;top:45.500px;color:#1a1a1a">Full Schema</span>
<span class="t lab" style="left:0;width:55.500px;top:64.500px">gamma</span>
<span class="t" style="left:62.200px;top:64.500px;color:#1a1a1a">Light</span>
<span class="t lab" style="left:0;width:55.500px;top:83.500px">style</span>
<span class="t" style="left:62.200px;top:83.500px;color:#1a1a1a">Rounded</span>
<span class="t lab" style="left:0;width:55.500px;top:102.200px">style_links</span>
<span class="t" style="left:62.200px;top:102.200px;color:#1a1a1a">Default</span>
<b class="t" style="left:4.600px;top:126.500px;color:#3f3f3f">Control</b>
</div>
<div id="status"><span class="t" style="left:5.200px;top:3.500px;color:#1c1c1c">Ready</span></div>
</div></body></html>
